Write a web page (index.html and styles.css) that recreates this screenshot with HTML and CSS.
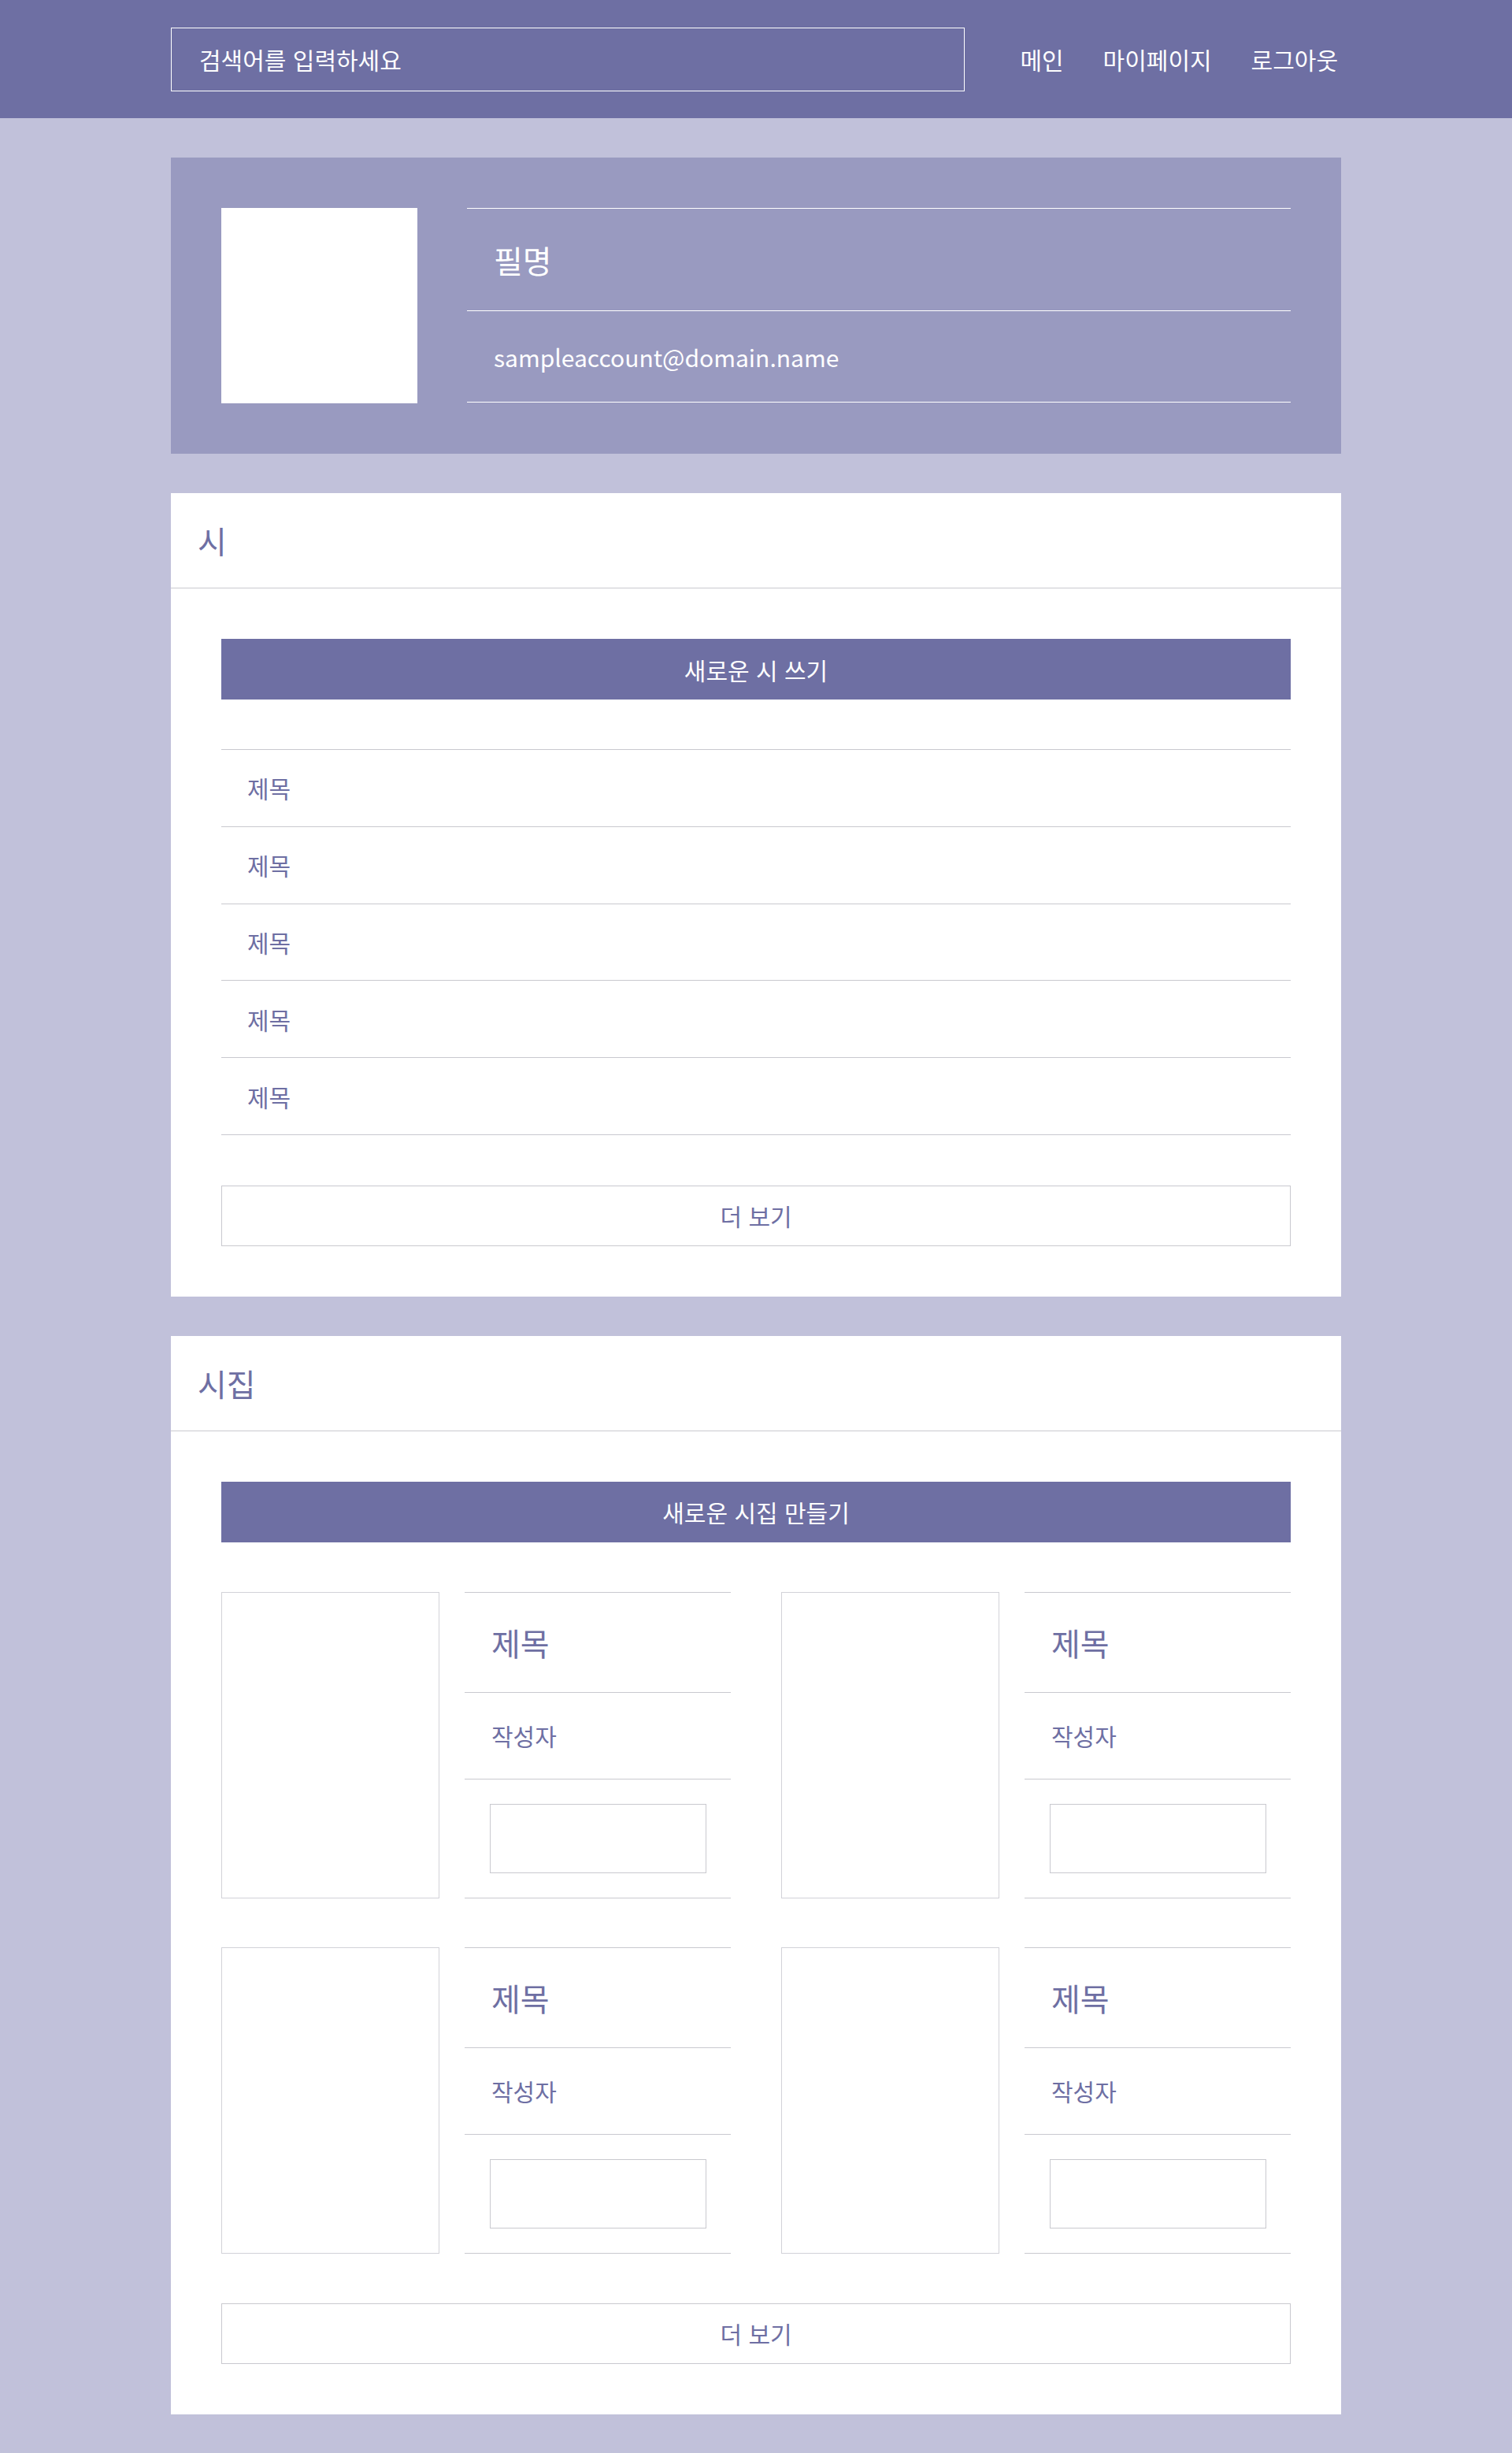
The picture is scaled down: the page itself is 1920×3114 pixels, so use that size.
FILE: index.html
```html
<!DOCTYPE html>
<html lang="ko">
<head>
<meta charset="utf-8">
<title>마이페이지</title>
<link rel="stylesheet" href="styles.css">
</head>
<body>
<header class="topbar">
  <div class="wrap topbar-inner">
    <div class="search">검색어를 입력하세요</div>
    <nav class="menu">
      <a class="menu-item">메인</a>
      <a class="menu-item">마이페이지</a>
      <a class="menu-item">로그아웃</a>
    </nav>
  </div>
</header>
<main class="wrap page">
  <section class="profile">
    <div class="avatar"></div>
    <div class="profile-info">
      <div class="pen-name">필명</div>
      <div class="email">sampleaccount@domain.name</div>
    </div>
  </section>

  <section class="card">
    <h2 class="card-title">시</h2>
    <div class="card-body">
      <div class="btn-primary">새로운 시 쓰기</div>
      <ul class="poem-list">
        <li class="poem-row">제목</li>
        <li class="poem-row">제목</li>
        <li class="poem-row">제목</li>
        <li class="poem-row">제목</li>
        <li class="poem-row">제목</li>
      </ul>
      <div class="btn-more">더 보기</div>
    </div>
  </section>

  <section class="card">
    <h2 class="card-title">시집</h2>
    <div class="card-body">
      <div class="btn-primary">새로운 시집 만들기</div>
      <div class="book-grid">
        <div class="book">
          <div class="cover"></div>
          <div class="book-info">
            <div class="book-title">제목</div>
            <div class="book-author">작성자</div>
            <div class="book-extra"><div class="extra-box"></div></div>
          </div>
        </div>
        <div class="book">
          <div class="cover"></div>
          <div class="book-info">
            <div class="book-title">제목</div>
            <div class="book-author">작성자</div>
            <div class="book-extra"><div class="extra-box"></div></div>
          </div>
        </div>
        <div class="book">
          <div class="cover"></div>
          <div class="book-info">
            <div class="book-title">제목</div>
            <div class="book-author">작성자</div>
            <div class="book-extra"><div class="extra-box"></div></div>
          </div>
        </div>
        <div class="book">
          <div class="cover"></div>
          <div class="book-info">
            <div class="book-title">제목</div>
            <div class="book-author">작성자</div>
            <div class="book-extra"><div class="extra-box"></div></div>
          </div>
        </div>
      </div>
      <div class="btn-more">더 보기</div>
    </div>
  </section>
</main>
</body>
</html>
```

FILE: styles.css
```css
* { box-sizing: border-box; }

html, body {
  margin: 0;
  padding: 0;
}

body {
  background: #c1c1da;
  font-family: "Noto Sans CJK KR", "Noto Sans", sans-serif;
  font-size: 30px;
  color: #6e6fa3;
}

.wrap {
  width: 1486px;
  margin: 0 auto;
}

/* top bar */
.topbar {
  background: #6e6fa3;
  height: 150px;
}

.topbar-inner {
  height: 100%;
  display: flex;
  align-items: center;
  justify-content: space-between;
}

.search {
  width: 1008px;
  height: 81px;
  border: 1px solid #ffffff;
  color: #ffffff;
  display: flex;
  align-items: center;
  padding-left: 35px;
  font-size: 30px;
}

.menu {
  display: flex;
  gap: 50px;
  padding-right: 4px;
}

.menu-item {
  color: #ffffff;
  font-size: 30px;
  text-decoration: none;
}

/* page */
.page {
  padding: 50px 0 48px;
  display: flex;
  flex-direction: column;
  gap: 50px;
}

/* profile */
.profile {
  background: #999ac0;
  padding: 64px;
  display: flex;
  align-items: flex-start;
  gap: 63px;
}

.avatar {
  width: 249px;
  height: 248px;
  background: #ffffff;
  flex: none;
}

.profile-info {
  flex: 1;
  border-top: 1px solid #ffffff;
  color: #ffffff;
}

.pen-name {
  height: 130px;
  border-bottom: 1px solid #ffffff;
  display: flex;
  align-items: center;
  padding-left: 34px;
  font-size: 40px;
}

.email {
  height: 116px;
  border-bottom: 1px solid #ffffff;
  display: flex;
  align-items: center;
  padding-left: 34px;
  font-size: 30px;
}

/* cards */
.card {
  background: #ffffff;
}

.card-title {
  margin: 0;
  height: 121px;
  border-bottom: 1px solid #c9c9cf;
  display: flex;
  align-items: center;
  padding-left: 34px;
  font-size: 40px;
  font-weight: 400;
  color: #6e6fa3;
}

.card-body {
  padding: 64px;
}

.btn-primary {
  height: 77px;
  background: #6e6fa3;
  color: #ffffff;
  display: flex;
  align-items: center;
  justify-content: center;
  font-size: 30px;
}

.btn-more {
  height: 77px;
  border: 1px solid #c9c9cf;
  color: #6e6fa3;
  display: flex;
  align-items: center;
  justify-content: center;
  font-size: 30px;
  margin-top: 64px;
}

/* poem list */
.poem-list {
  list-style: none;
  margin: 63px 0 0;
  padding: 0;
  border-top: 1px solid #c9c9cf;
}

.poem-row {
  height: 97.8px;
  border-bottom: 1px solid #c9c9cf;
  display: flex;
  align-items: center;
  padding-left: 33px;
}

/* book grid */
.book-grid {
  margin-top: 63px;
  display: grid;
  grid-template-columns: 1fr 1fr;
  column-gap: 64px;
  row-gap: 63px;
}

.book {
  display: grid;
  grid-template-columns: 277px 1fr;
  column-gap: 32px;
  height: 388px;
}

.cover {
  border: 1px solid #d2d2d8;
}

.book-info {
  border-top: 1px solid #c9c9cf;
  display: flex;
  flex-direction: column;
}

.book-title {
  height: 127px;
  border-bottom: 1px solid #c9c9cf;
  display: flex;
  align-items: center;
  padding-left: 34px;
  font-size: 40px;
}

.book-author {
  height: 110px;
  border-bottom: 1px solid #c9c9cf;
  display: flex;
  align-items: center;
  padding-left: 34px;
}

.book-extra {
  flex: 1;
  border-bottom: 1px solid #c9c9cf;
  padding: 31px 31px 31px 32px;
}

.extra-box {
  height: 88px;
  border: 1px solid #c9c9cf;
}
```
